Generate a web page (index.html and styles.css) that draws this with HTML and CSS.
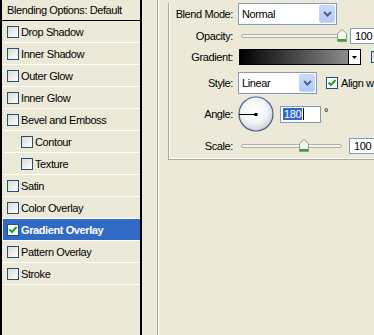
FILE: index.html
```html
<!DOCTYPE html>
<html>
<head>
<meta charset="utf-8">
<link rel="stylesheet" href="styles.css">
</head>
<body>
<div class="app">
  <div class="list">
    <div class="list-head">Blending Options: Default</div>
    <div class="item"><span class="cb"></span><span class="txt">Drop Shadow</span></div>
    <div class="item"><span class="cb"></span><span class="txt">Inner Shadow</span></div>
    <div class="item"><span class="cb"></span><span class="txt">Outer Glow</span></div>
    <div class="item"><span class="cb"></span><span class="txt">Inner Glow</span></div>
    <div class="item"><span class="cb"></span><span class="txt">Bevel and Emboss</span></div>
    <div class="item sub"><span class="cb"></span><span class="txt">Contour</span></div>
    <div class="item sub"><span class="cb"></span><span class="txt">Texture</span></div>
    <div class="item"><span class="cb"></span><span class="txt">Satin</span></div>
    <div class="item"><span class="cb"></span><span class="txt">Color Overlay</span></div>
    <div class="item sel"><span class="cb on"><svg width="10" height="10" viewBox="0 0 10 10"><path d="M1.5 4.5 L4 7 L8.5 2" fill="none" stroke="#21A121" stroke-width="2"/></svg></span><span class="txt">Gradient Overlay</span></div>
    <div class="item"><span class="cb"></span><span class="txt">Pattern Overlay</span></div>
    <div class="item"><span class="cb"></span><span class="txt">Stroke</span></div>
  </div>

  <div class="pane">
    <div class="group">
      <div class="row r1">
        <span class="lbl">Blend Mode:</span>
        <div class="select w-blend">
          <span class="val">Normal</span>
          <span class="btn"><svg width="9" height="6" viewBox="0 0 9 6"><path d="M1 1 L4.5 4.5 L8 1" fill="none" stroke="#4D6185" stroke-width="2"/></svg></span>
        </div>
      </div>

      <div class="row r2">
        <span class="lbl">Opacity:</span>
        <div class="slider">
          <span class="track"></span>
          <svg class="thumb" style="left:96px" width="10" height="13" viewBox="0 0 10 13"><path d="M0.5 12.5 V4.5 L5 0.5 L9.5 4.5 V12.5 Z" fill="#F6F6F2" stroke="#8C9A8C"/><rect x="1" y="10" width="8" height="2" fill="#2DAA2D"/></svg>
        </div>
        <div class="num n-op">100</div>
      </div>

      <div class="row r3">
        <span class="lbl">Gradient:</span>
        <div class="grad"></div>
        <div class="grad-btn"><svg width="5" height="3" viewBox="0 0 5 3"><path d="M0 0 H5 L2.5 3 Z" fill="#000"/></svg></div>
        <span class="cb rev"></span>
      </div>

      <div class="row r4">
        <span class="lbl">Style:</span>
        <div class="select w-style">
          <span class="val">Linear</span>
          <span class="btn"><svg width="9" height="6" viewBox="0 0 9 6"><path d="M1 1 L4.5 4.5 L8 1" fill="none" stroke="#4D6185" stroke-width="2"/></svg></span>
        </div>
        <span class="cb on align"><svg width="10" height="10" viewBox="0 0 10 10"><path d="M1.5 4.5 L4 7 L8.5 2" fill="none" stroke="#21A121" stroke-width="2"/></svg></span>
        <span class="align-txt">Align with Layer</span>
      </div>

      <div class="row r5">
        <span class="lbl">Angle:</span>
        <svg class="dial" width="36" height="36" viewBox="0 0 36 36">
          <defs>
            <radialGradient id="dg" cx="45%" cy="40%" r="62%">
              <stop offset="0" stop-color="#FFFFFF"/>
              <stop offset="0.6" stop-color="#F3F4F6"/>
              <stop offset="1" stop-color="#C8CEDA"/>
            </radialGradient>
          </defs>
          <circle cx="18" cy="18" r="17" fill="url(#dg)" stroke="#4A6186" stroke-width="1.2"/>
          <line x1="1" y1="18.5" x2="18" y2="18.5" stroke="#000" stroke-width="1"/>
          <rect x="16.5" y="17" width="3" height="3" fill="#000"/>
        </svg>
        <div class="num n-angle"><span class="hl">180</span><span class="caret"></span></div>
        <span class="deg">°</span>
      </div>

      <div class="row r6">
        <span class="lbl">Scale:</span>
        <div class="slider">
          <span class="track"></span>
          <svg class="thumb" style="left:58px" width="10" height="13" viewBox="0 0 10 13"><path d="M0.5 12.5 V4.5 L5 0.5 L9.5 4.5 V12.5 Z" fill="#F6F6F2" stroke="#8C9A8C"/><rect x="1" y="10" width="8" height="2" fill="#2DAA2D"/></svg>
        </div>
        <div class="num n-scale">100</div>
      </div>
    </div>
  </div>
</div>
</body>
</html>
```

FILE: styles.css
```css
* { box-sizing: border-box; }
html, body { margin: 0; padding: 0; }
body {
  width: 374px;
  height: 335px;
  overflow: hidden;
  background: #ECE9D8;
  font-family: "Liberation Sans", Arial, sans-serif;
  font-size: 11px;
  letter-spacing: -0.4px;
  color: #000;
}
.app { display: flex; height: 335px; }

/* left style list */
.list {
  flex: 0 0 142px;
  border-left: 2px solid #000;
  border-right: 2px solid #000;
  padding-left: 1px;
}
.list-head {
  height: 21px;
  line-height: 20px;
  border-bottom: 1px solid #000;
  margin-left: -1px;
  padding-left: 5px;
  white-space: nowrap;
}
.item {
  height: 22px;
  border-bottom: 1px solid #fff;
  display: flex;
  align-items: center;
  gap: 2px;
  padding-left: 4px;
  white-space: nowrap;
}
.item.sub { padding-left: 18px; }
.item.sel { background: #316AC5; color: #fff; font-weight: bold; }
.cb {
  flex: none;
  width: 12px;
  height: 12px;
  border: 1px solid #1C5180;
  background: linear-gradient(135deg, #DCDCD5 0%, #F4F4F0 70%, #FFFFFF 100%);
  display: inline-flex;
  align-items: center;
  justify-content: center;
}
.cb.on { background: #fff; }

/* right pane */
.pane {
  flex: 1;
  margin-left: 15px;
  border-left: 1px solid #ACA899;
  box-shadow: inset 1px 0 0 #fff;
  padding-left: 10px;
  overflow: hidden;
}
.group {
  width: 260px;
  border-left: 1px solid #ACA899;
  border-bottom: 1px solid #ACA899;
  box-shadow: inset 1px -1px 0 #fff;
  padding-bottom: 5px;
}
.row { display: flex; align-items: center; white-space: nowrap; }
.lbl { flex: none; width: 64px; text-align: right; }
.r1 { margin-top: 3px; height: 22px; }
.r2 { margin-top: 3px; height: 16px; }
.r3 { margin-top: 5px; height: 16px; }
.r4 { margin-top: 7px; height: 22px; }
.r5 { margin-top: 2px; height: 36px; }
.r6 { margin-top: 6px; height: 16px; }

.select {
  flex: none;
  display: flex;
  height: 22px;
  margin-left: 5px;
  border: 1px solid #7F9DB9;
  background: #fff;
  padding: 1px;
}
.w-blend { width: 99px; }
.w-style { width: 79px; }
.select .val { flex: 1; display: flex; align-items: center; padding-left: 2px; }
.select .btn {
  flex: none;
  width: 16px;
  border: 1px solid #C4D4FB;
  border-radius: 2px;
  background: linear-gradient(#CCDAFC, #B6C9F6);
  display: flex;
  align-items: center;
  justify-content: center;
}

.slider {
  position: relative;
  flex: none;
  width: 105px;
  height: 16px;
  margin-left: 8px;
  display: flex;
  align-items: center;
}
.track {
  width: 101px;
  height: 4px;
  border: 1px solid #B2B0A6;
  border-radius: 2px;
  background: #F5F4EE;
}
.thumb { position: absolute; top: 1px; }

.num {
  flex: none;
  height: 16px;
  border: 1px solid #7F9DB9;
  background: #fff;
  display: flex;
  align-items: center;
  padding-left: 4px;
}
.n-op { width: 45px; margin-left: 4px; }
.n-scale { width: 45px; margin-left: 3px; }
.n-angle { width: 41px; height: 17px; margin-left: 6px; padding-left: 2px; }
.hl { background: #316AC5; color: #fff; padding: 0 1px; line-height: 12px; }
.caret { width: 1px; height: 12px; background: #000; margin-left: 1px; }
.deg { margin-left: 3px; margin-top: -4px; }

.grad {
  flex: none;
  width: 110px;
  height: 16px;
  margin-left: 6px;
  border: 1px solid #000;
  background: linear-gradient(to right, #000 0%, #8C8C8C 100%);
}
.grad-btn {
  flex: none;
  width: 12px;
  height: 16px;
  border: 1px solid #000;
  border-left: none;
  background: #fff;
  display: flex;
  align-items: center;
  justify-content: center;
}
.rev { margin-left: 10px; }

.dial { flex: none; margin-left: 5px; }
.align { margin-left: 9px; }
.align-txt { margin-left: 3px; }
```
